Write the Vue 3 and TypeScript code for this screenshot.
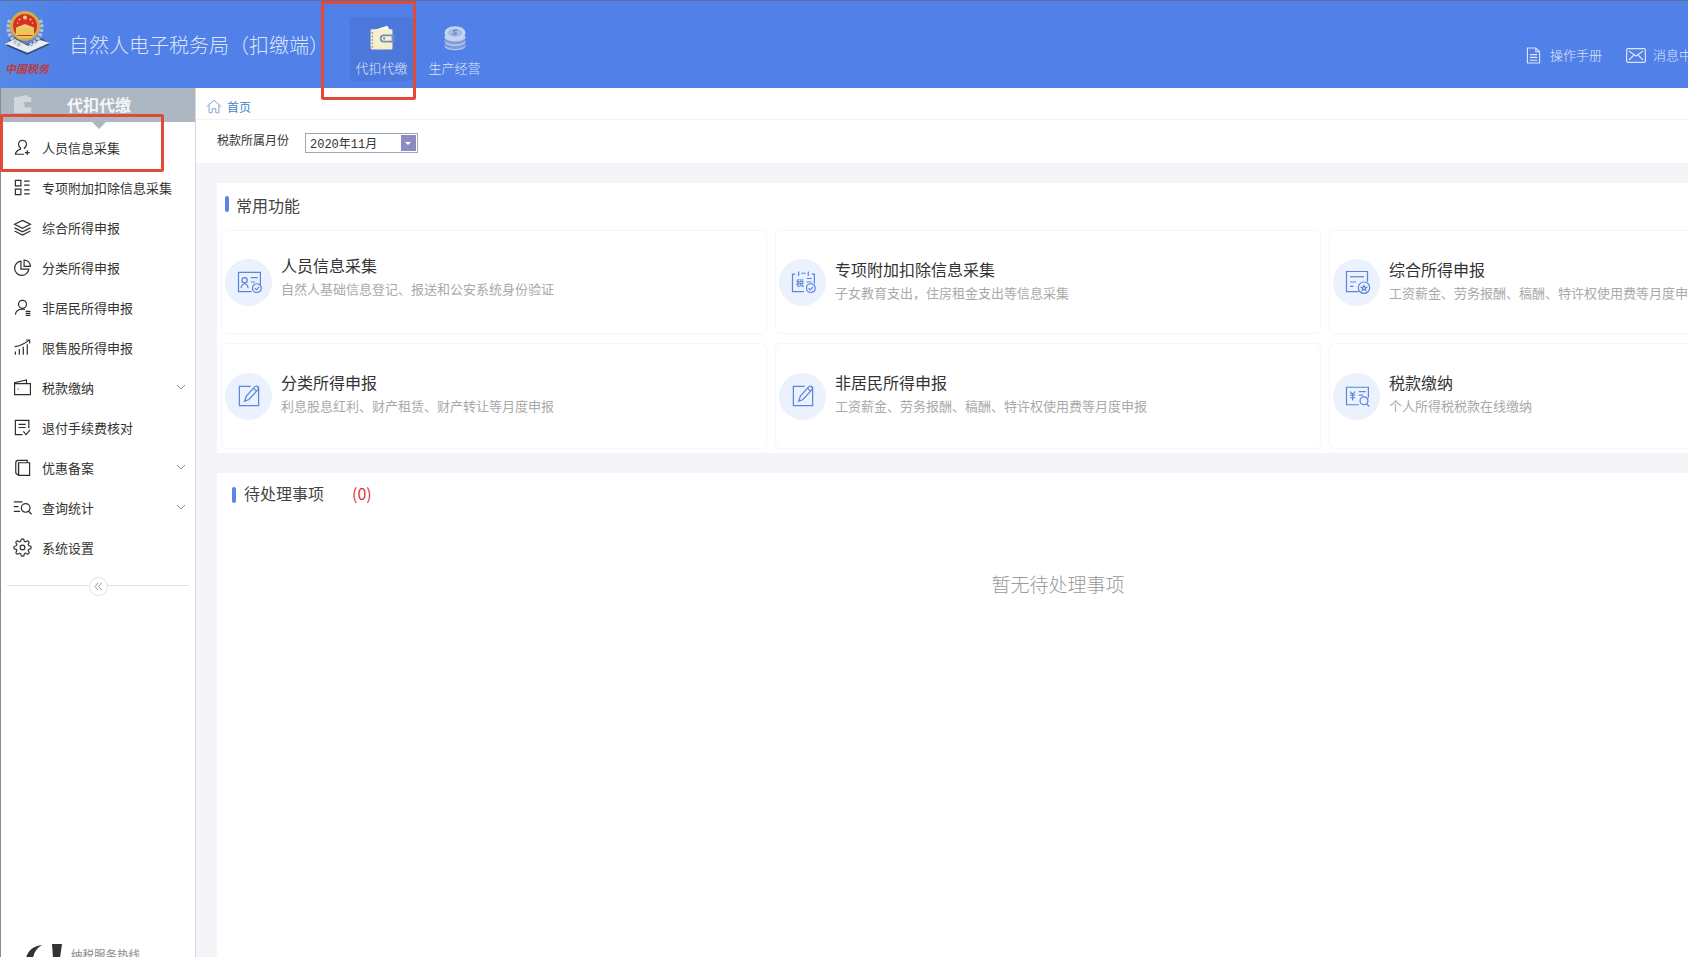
<script setup lang="ts">
interface MenuItem { label: string; icon: string[]; caret?: boolean }
interface FnCard { title: string; desc: string; icon: string[]; shift: string; tag?: string }

const menu: MenuItem[] = [
  { label: '人员信息采集', icon: ['M12 3a5 5 0 0 1 5 5c0 2-1 3.6-2.5 4.6l0 1.4', 'M12 3a5 5 0 0 0-5 5c0 2 1 3.6 2.5 4.6v1.4C6 15.2 3.5 17 3 20.5h11', 'M18 15.5v6M15 18.5h6'] },
  { label: '专项附加扣除信息采集', icon: ['M3 3h7v7H3z', 'M3 14h7v7H3z', 'M14 4h7M14 9h7M14 15h7M14 20h7'] },
  { label: '综合所得申报', icon: ['M12 3l10 5-10 5L2 8z', 'M2 12.5l10 5 10-5', 'M2 16.5l10 5 10-5'] },
  { label: '分类所得申报', icon: ['M10 4a9 9 0 1 0 10 10H10z', 'M14 2.5a8 8 0 0 1 8 8h-8z'] },
  { label: '非居民所得申报', icon: ['M12 3a5 5 0 1 1 0 10 5 5 0 0 1 0-10z', 'M3 21c.5-4.500 4-7 9-7 1 0 2 .1 3 .4', 'M16 17h6M16 19.500h6M16 22h6'] },
  { label: '限售股所得申报', icon: ['M3 21v-4M8 21v-7M13 21v-10M18 21V8', 'M2 11c7-1 13-4 18-8', 'M16.500 2.500H21V7'] },
  { label: '税款缴纳', caret: true, icon: ['M2 7v14h20V7H2z', 'M2 7V6l15-3.500V7', 'M6 14h1'] },
  { label: '退付手续费核对', icon: ['M20 13V3H3v18h9', 'M7 8h9M7 12h9', 'M13 17l3.500 4 5-6'] },
  { label: '优惠备案', caret: true, icon: ['M7 6h14v16H7z', 'M7 6v15h-.5A3 3 0 0 1 3.500 18V6a3 3 0 0 1 3-3H18v3'] },
  { label: '查询统计', caret: true, icon: ['M1 5h11M1 11h6M1 17h8', 'M16 7a5.500 5.500 0 1 1 0 11 5.500 5.500 0 0 1 0-11z', 'M20 17l3.500 3.500'] },
  { label: '系统设置', icon: ['M12 15a3 3 0 1 0 0-6 3 3 0 0 0 0 6z', 'M19.400 15a1.650 1.650 0 0 0 .33 1.820l.06.06a2 2 0 0 1 0 2.830 2 2 0 0 1-2.830 0l-.06-.06a1.650 1.650 0 0 0-1.820-.33 1.650 1.650 0 0 0-1 1.510V21a2 2 0 0 1-2 2 2 2 0 0 1-2-2v-.09A1.650 1.650 0 0 0 9 19.400a1.650 1.650 0 0 0-1.820.33l-.06.06a2 2 0 0 1-2.830 0 2 2 0 0 1 0-2.830l.06-.06a1.650 1.650 0 0 0 .33-1.820 1.650 1.650 0 0 0-1.510-1H3a2 2 0 0 1-2-2 2 2 0 0 1 2-2h.09A1.650 1.650 0 0 0 4.600 9a1.650 1.650 0 0 0-.33-1.820l-.06-.06a2 2 0 0 1 0-2.830 2 2 0 0 1 2.830 0l.06.06a1.650 1.650 0 0 0 1.820.33H9a1.650 1.650 0 0 0 1-1.510V3a2 2 0 0 1 2-2 2 2 0 0 1 2 2v.09a1.650 1.650 0 0 0 1 1.510 1.650 1.650 0 0 0 1.820-.33l.06-.06a2 2 0 0 1 2.830 0 2 2 0 0 1 0 2.830l-.06.06a1.650 1.650 0 0 0-.33 1.820V9a1.650 1.650 0 0 0 1.510 1H21a2 2 0 0 1 2 2 2 2 0 0 1-2 2h-.09a1.650 1.650 0 0 0-1.510 1z'] },
]

const edit = ['M25 6H27V27H5V5H18', 'M11 22l2-6L23 5c1-1 3 0 3.500 1s.5 2-.5 3L16 20z', 'M21 7l3.500 3.500']

const cards: FnCard[] = [
  { title: '人员信息采集', desc: '自然人基础信息登记、报送和公安系统身份验证', shift: 'up', icon: ['M19 27H4V5h25v14', 'M11 11a3 3 0 1 1 0 6 3 3 0 0 1 0-6z', 'M7 23c.5-3.500 2-5 4-5s3.500 1.500 4 5', 'M18 11h8M18 16h5', 'M25 18a5 5 0 1 1 0 10 5 5 0 0 1 0-10z', 'M22.500 23l2 2 3-3.500'] },
  { title: '专项附加扣除信息采集', desc: '子女教育支出，住房租金支出等信息采集', shift: 'mid', tag: '税', icon: ['M17 27H4V7h3M26 7h3v11', 'M11 4v5M22 4v5M14 6h5', 'M20 12h6M20 16h6', 'M25 18a5 5 0 1 1 0 10 5 5 0 0 1 0-10z', 'M22.500 23l2 2 3-3.500'] },
  { title: '综合所得申报', desc: '工资薪金、劳务报酬、稿酬、特许权使用费等月度申报', shift: 'mid', icon: ['M18 27H4V4h24v12', 'M8 10h16', 'M8 16h7M8 21h4', 'M24 16a6.500 6.500 0 1 1 0 13 6.500 6.500 0 0 1 0-13z', 'M24 20l1 2h2l-1.500 1.500.5 2-2-1-2 1 .5-2L21 22h2z'] },
  { title: '分类所得申报', desc: '利息股息红利、财产租赁、财产转让等月度申报', shift: 'low', icon: edit },
  { title: '非居民所得申报', desc: '工资薪金、劳务报酬、稿酬、特许权使用费等月度申报', shift: 'low', icon: edit },
  { title: '税款缴纳', desc: '个人所得税税款在线缴纳', shift: 'low', icon: ['M18 26H4V6h25v12', 'M8 11l3 3 3-3M11 14v7M8 15h6M8 18h6', 'M18 11h8M18 15h5', 'M24 17a4.500 4.500 0 1 1 0 9 4.500 4.500 0 0 1 0-9z', 'M27 25l3 3'] },
]
</script>

<template>
  <div class="page">
    <header class="top">
      <div class="brand">
        <svg class="emblem" viewBox="0 0 54 50" width="54" height="50" aria-hidden="true">
          <path d="M7 32L26 44l22-9-7-5-16 6-12-8z" fill="#49597c" />
          <path d="M4 36l10-5 13 7 12-6 10 3-21 10z" fill="#e8ecf3" />
          <path d="M6 37l20 9 22-10" fill="none" stroke="#39486a" stroke-width="1.500" />
          <path d="M9 12C5 22 9 33 21 38" fill="none" stroke="#b6c0cd" stroke-width="4" stroke-dasharray="3 1.500" />
          <path d="M39 12c4 10 0 21-12 26" fill="none" stroke="#b6c0cd" stroke-width="4" stroke-dasharray="3 1.500" />
          <circle cx="24" cy="18" r="15" fill="#d5ab45" />
          <circle cx="24" cy="18" r="12" fill="#d62f26" />
          <rect x="15" y="20" width="18" height="7" fill="#eac65c" />
          <path d="M14 20l10-4 10 4z" fill="#f0d070" />
          <rect x="17" y="28" width="14" height="2" fill="#eac65c" />
          <circle cx="24" cy="9.500" r="2" fill="#f3d66e" />
          <circle cx="18.500" cy="11.500" r="1" fill="#f3d66e" />
          <circle cx="29.500" cy="11.500" r="1" fill="#f3d66e" />
          <circle cx="16.500" cy="15" r=".8" fill="#f3d66e" />
          <circle cx="31.500" cy="15" r=".8" fill="#f3d66e" />
        </svg>
        <span class="seal">中国税务</span>
      </div>
      <h1 class="app-name">自然人电子税务局（扣缴端）</h1>
      <nav class="tabs">
        <a class="tab active">
          <svg viewBox="0 0 32 32" width="28" height="28" aria-hidden="true">
            <path d="M6 7l16-5 3 5z" fill="#fff" />
            <rect x="3" y="6" width="25" height="23" rx="1.500" fill="#f7efcb" />
            <path d="M5 9v18" stroke="#8d93a8" stroke-width="1.500" stroke-dasharray="2 2" />
            <path d="M18 12h12v9H18a4.500 4.500 0 0 1 0-9z" fill="#6f8fc4" />
            <path d="M18 14h9v5h-9a2.500 2.500 0 0 1 0-5z" fill="#f7efcb" />
            <circle cx="18.500" cy="16.500" r="1.200" fill="#5a76a8" />
          </svg>
          <span>代扣代缴</span>
        </a>
        <a class="tab">
          <svg viewBox="0 0 32 32" width="28" height="28" aria-hidden="true">
            <ellipse cx="16" cy="25" rx="12" ry="5" fill="#b8c9eb" />
            <ellipse cx="16" cy="23.500" rx="12" ry="5" fill="#7f9ddb" />
            <ellipse cx="16" cy="20" rx="12" ry="5" fill="#c2d0ec" />
            <ellipse cx="16" cy="18.500" rx="12" ry="5" fill="#7f9ddb" />
            <ellipse cx="16" cy="15" rx="12" ry="5" fill="#c2d0ec" />
            <ellipse cx="16" cy="10" rx="12" ry="7.500" fill="#c9d6ef" />
            <ellipse cx="16" cy="10" rx="8.500" ry="5" fill="#a9bde6" />
            <path d="M19 7.500c-3-1-5.500 0-4 1.500s3.500 1 2 2.500-3.500 0-4.500-.5" fill="none" stroke="#5f82cf" stroke-width="1.300" />
          </svg>
          <span>生产经营</span>
        </a>
      </nav>
      <div class="tools">
        <a class="tool">
          <svg viewBox="0 0 16 18" width="15" height="17" fill="none" stroke="currentColor" stroke-width="1.200" aria-hidden="true">
            <path d="M1.500 1h9l4 4v12h-13z" />
            <path d="M10.500 1v4h4M4 8h8M4 11h8M4 14h8" />
          </svg>
          <span>操作手册</span>
        </a>
        <a class="tool mail">
          <svg viewBox="0 0 20 15" width="20" height="15" fill="none" stroke="currentColor" stroke-width="1.200" aria-hidden="true">
            <rect x=".6" y=".6" width="18.800" height="13.800" rx="1.500" />
            <path d="M3 3l7 5 7-5M3 12l5-5M17 12l-5-5" />
          </svg>
          <span>消息中心</span>
        </a>
      </div>
    </header>

    <div class="body">
      <aside class="side">
        <div class="side-title">
          <svg viewBox="0 0 32 32" width="22" height="22" aria-hidden="true">
            <path d="M6 6l15-3 3 3z" fill="#d3d8de" />
            <rect x="3" y="6" width="25" height="23" fill="#d3d8de" />
            <path d="M18 13h12v8H18z" fill="#adb7c2" />
          </svg>
          <span>代扣代缴</span>
          <i class="pointer"></i>
        </div>
        <ul class="menu">
          <li v-for="item in menu" :key="item.label" class="menu-item">
            <svg class="menu-icon" viewBox="0 0 24 24" width="19" height="19" fill="none" stroke="#2e2e2e" stroke-width="1.500" aria-hidden="true">
              <path v-for="d in item.icon" :key="d" :d="d" />
            </svg>
            <span class="menu-label">{{ item.label }}</span>
            <svg v-if="item.caret" class="caret" viewBox="0 0 10 6" width="10" height="6" fill="none" stroke="#8c8c8c" stroke-width="1" aria-hidden="true">
              <path d="M1 1l4 4 4-4" />
            </svg>
          </li>
        </ul>
        <div class="collapse">
          <button class="collapse-btn" aria-label="收起">
            <svg viewBox="0 0 10 10" width="9" height="9" fill="none" stroke="#8f8f8f" stroke-width="1" aria-hidden="true">
              <path d="M4.500 1L1 5l3.500 4M8.500 1L5 5l3.500 4" />
            </svg>
          </button>
        </div>
        <div class="hotline">
          <svg viewBox="0 0 40 14" width="40" height="14" aria-hidden="true">
            <path d="M1 14C3 6 9 2 17 1c-5 3-8 7-9 13z" fill="#333" />
            <path d="M27 0h10l-2 14h-7z" fill="#333" />
          </svg>
          <span>纳税服务热线</span>
        </div>
      </aside>

      <main class="main">
        <div class="crumb">
          <svg viewBox="0 0 18 16" width="16" height="15" fill="none" stroke="#7fa3c9" stroke-width="1.100" aria-hidden="true">
            <path d="M1 8l8-7 8 7M3.500 6.500V15h3.500v-4.500h4V15h3.500V6.500" />
          </svg>
          <span>首页</span>
        </div>
        <div class="month-row">
          <label class="month-label">税款所属月份</label>
          <div class="month-select">
            <span class="month-value">2020年11月</span>
            <span class="month-arrow"></span>
          </div>
        </div>
        <div class="content">
          <section class="panel common">
            <h2 class="heading">常用功能</h2>
            <div class="grid">
              <article v-for="c in cards" :key="c.title" class="card">
                <div class="circle">
                  <svg viewBox="0 0 32 32" width="28" height="28" fill="none" stroke="#5b85dc" stroke-width="1.400" aria-hidden="true">
                    <path v-for="d in c.icon" :key="d" :d="d" />
                    <text v-if="c.tag" x="8" y="20" class="tag">{{ c.tag }}</text>
                  </svg>
                </div>
                <div class="card-text" :class="c.shift">
                  <h3 class="card-title">{{ c.title }}</h3>
                  <p class="card-desc">{{ c.desc }}</p>
                </div>
              </article>
            </div>
          </section>
          <section class="panel todo">
            <h2 class="heading todo-heading">待处理事项<em class="count">(0)</em></h2>
            <p class="empty">暂无待处理事项</p>
          </section>
        </div>
      </main>
    </div>

    <i class="mark mark-tab"></i>
    <i class="mark mark-menu"></i>
  </div>
</template>

<style>
html, body { margin: 0; overflow: hidden; background: #fff; }
</style>

<style scoped>
.page {
  position: relative;
  width: 1688px;
  height: 957px;
  overflow: hidden;
  display: flex;
  flex-direction: column;
  font-family: "Noto Sans CJK SC", "Liberation Sans", sans-serif;
  color: #333;
}
.top {
  height: 88px;
  flex: none;
  box-sizing: border-box;
  border-top: 1px solid #5d6f9c;
  background: #5080e8;
  display: flex;
  align-items: flex-start;
  color: #dce6fa;
}
.brand { position: relative; width: 69px; height: 87px; flex: none; background: linear-gradient(90deg, #5688e6, #5080e8); }
.emblem { position: absolute; left: 1px; top: 7px; }
.seal {
  position: absolute;
  left: 5px;
  top: 60px;
  font-size: 11px;
  font-weight: 700;
  line-height: 14px;
  color: #bd3a3a;
  white-space: nowrap;
  font-style: italic;
}
.app-name {
  margin: 0;
  width: 281px;
  flex: none;
  font-size: 20px;
  line-height: 28px;
  margin-top: 30px;
  font-weight: 300;
  white-space: nowrap;
}
.tabs { display: flex; margin-top: 16px; gap: 10px; }
.tab {
  width: 63px;
  height: 64px;
  display: flex;
  flex-direction: column;
  align-items: center;
  font-size: 13px;
  font-weight: 300;
  padding-top: 7px;
  box-sizing: border-box;
  border-radius: 3px;
}
.tab span { margin-top: 7px; line-height: 18px; white-space: nowrap; }
.tab.active { background: #4c78dc; }
.tools { margin-left: auto; margin-top: 45px; display: flex; margin-right: -17px; flex: none; }
.tool {
  display: flex;
  align-items: center;
  gap: 9px;
  font-size: 13px;
  font-weight: 300;
  line-height: 18px;
  white-space: nowrap;
}
.tool.mail { margin-left: 24px; gap: 7px; }
.body { flex: 1; min-height: 0; display: flex; }
.side {
  width: 196px;
  flex: none;
  box-sizing: border-box;
  border-left: 1px solid #8a8a8a;
  border-right: 1px solid #d9d9d9;
  position: relative;
  background: #fff;
}
.side-title {
  height: 34px;
  background: #adb7c2;
  display: flex;
  align-items: center;
  color: #f4f6f8;
  font-size: 16px;
  font-weight: 700;
  padding-left: 11px;
  padding-bottom: 2px;
  box-sizing: border-box;
  position: relative;
}
.side-title span { margin-left: 33px; }
.pointer {
  position: absolute;
  left: 91px;
  top: 34px;
  width: 0;
  height: 0;
  border-left: 7px solid transparent;
  border-right: 7px solid transparent;
  border-top: 7px solid #adb7c2;
}
.menu { list-style: none; margin: 5px 0 0; padding: 0; }
.menu-item {
  height: 40px;
  display: flex;
  align-items: center;
  padding: 0 9px 0 12px;
  font-size: 13px;
  color: #333;
}
.menu-icon { flex: none; }
.menu-label { margin-left: 10px; white-space: nowrap; flex: 1; }
.caret { flex: none; }
.collapse {
  margin: 9px 6px 0;
  height: 20px;
  position: relative;
  display: flex;
  justify-content: center;
  align-items: center;
}
.collapse::before {
  content: "";
  position: absolute;
  left: 0;
  right: 0;
  top: 9px;
  height: 1px;
  background: #e2e2e2;
}
.collapse-btn {
  position: relative;
  width: 19px;
  height: 19px;
  padding: 0;
  border: 1px solid #e2e2e2;
  border-radius: 50%;
  background: #fff;
  display: flex;
  align-items: center;
  justify-content: center;
}
.hotline {
  position: absolute;
  left: 24px;
  top: 856px;
  display: flex;
  align-items: flex-start;
  gap: 6px;
  font-size: 11.500px;
  color: #8a8a8a;
  white-space: nowrap;
  line-height: 14px;
}
.hotline span { margin-top: 3px; }
.main { flex: 1; min-width: 0; display: flex; flex-direction: column; }
.crumb {
  height: 32px;
  flex: none;
  display: flex;
  align-items: center;
  gap: 5px;
  padding: 6px 0 0 10px;
  box-sizing: border-box;
  border-bottom: 1px solid #f0f2f5;
  color: #3f86bf;
  font-size: 12px;
}
.month-row {
  height: 43px;
  flex: none;
  display: flex;
  align-items: center;
  padding-left: 21px;
}
.month-label { width: 88px; font-size: 12px; color: #333; white-space: nowrap; margin-top: -5px; }
.month-select {
  width: 113px;
  height: 20px;
  box-sizing: border-box;
  border: 1px solid #9aa9b8;
  display: flex;
  align-items: center;
  padding: 0 1px 0 4px;
  font-size: 12px;
  margin-top: 3px;
}
.month-value { flex: 1; font-family: "Liberation Mono", "Noto Sans CJK SC", monospace; }
.month-arrow {
  width: 15px;
  height: 16px;
  background: #8d8cc0;
  position: relative;
}
.month-arrow::after {
  content: "";
  position: absolute;
  left: 4px;
  top: 7px;
  border-left: 3.500px solid transparent;
  border-right: 3.500px solid transparent;
  border-top: 3.500px solid #fff;
}
.content {
  flex: 1;
  min-height: 0;
  background: #f3f5f8;
  padding: 20px 0 0 21px;
  display: flex;
  flex-direction: column;
  gap: 20px;
}
.panel { background: #fff; flex: none; width: 1600px; }
.common { height: 270px; padding: 0 0 0 4px; box-sizing: border-box; }
.heading {
  margin: 0;
  height: 47px;
  font-size: 16px;
  font-weight: 400;
  line-height: 44px;
  padding-left: 15px;
  position: relative;
  color: #444;
}
.heading::before {
  content: "";
  position: absolute;
  left: 4px;
  top: 13px;
  width: 4px;
  height: 16px;
  border-radius: 2px;
  background: #5b85e6;
}
.grid {
  display: grid;
  grid-template-columns: 546px 546px 546px;
  grid-template-rows: 104px 106px;
  gap: 9px 8px;
}
.card {
  box-sizing: border-box;
  border: 1px solid #f5f6f8;
  border-radius: 6px;
  display: flex;
  align-items: center;
  padding-left: 3px;
}
.circle {
  width: 47px;
  height: 47px;
  flex: none;
  border-radius: 50%;
  background: #ebf2fd;
  display: flex;
  align-items: center;
  justify-content: center;
}
.tag { font-size: 9px; font-weight: 700; fill: #5b85dc; stroke: none; }
.card-text { margin-left: 9px; }
.card-text.up { margin-top: -10px; }
.card-text.mid { margin-top: -2px; }
.card-text.low { margin-top: -5px; }
.card-title { margin: 0; font-size: 16px; font-weight: 400; line-height: 24px; color: #333; }
.card-desc { margin: 0; font-size: 13px; line-height: 24px; color: #a9a9a9; white-space: nowrap; }
.todo { flex: 1; }
.todo-heading { padding-left: 27px; line-height: 40px; }
.todo-heading::before { left: 15px; top: 14px; height: 16px; }
.count { font-style: normal; color: #d9393a; margin-left: 28px; font-size: 16px; }
.empty {
  margin: 50px 0 0;
  width: 1682px;
  text-align: center;
  font-size: 19px;
  line-height: 28px;
  color: #999;
  font-weight: 300;
}
.mark {
  position: absolute;
  box-sizing: border-box;
  border: 3px solid #e04a36;
  border-radius: 2px;
}
.mark-tab { left: 321px; top: 1px; width: 95px; height: 99px; }
.mark-menu { left: 0; top: 114px; width: 164px; height: 58px; }
</style>
